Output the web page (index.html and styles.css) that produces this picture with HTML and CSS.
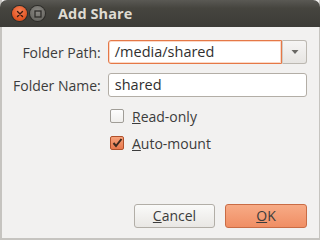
FILE: index.html
```html
<!DOCTYPE html>
<html>
<head>
<meta charset="utf-8">
<link rel="stylesheet" href="styles.css">
</head>
<body>
<div class="window">
  <div class="titlebar">
    <span class="wbtn close">
      <svg width="14" height="14" viewBox="0 0 14 14"><path d="M4.5 4.5 L9.5 9.5 M9.5 4.5 L4.5 9.5" stroke="#3a1a10" stroke-width="1.4" stroke-linecap="round"/></svg>
    </span>
    <span class="wbtn max">
      <svg width="14" height="14" viewBox="0 0 14 14"><rect x="4" y="4" width="6" height="6" fill="none" stroke="#2e2d2a" stroke-width="1.3"/></svg>
    </span>
    <span class="title">Add Share</span>
  </div>
  <div class="content">
    <div class="form">
      <label class="lbl">Folder Path:</label>
      <div class="combo">
        <div class="entry focus">/media/shared</div>
        <div class="drop"><svg width="8" height="6" viewBox="0 0 8 6"><path d="M0.5 1 L7.5 1 L4 5 Z" fill="#6a6864"/></svg></div>
      </div>
      <label class="lbl">Folder Name:</label>
      <div class="entry">shared</div>
    </div>
    <div class="checks">
      <div class="check"><span class="box"></span><span><u>R</u>ead-only</span></div>
      <div class="check"><span class="box on"><svg width="14" height="14" viewBox="0 0 14 14"><path d="M3.5 7 L6 10 L11.5 3" fill="none" stroke="#3d2a20" stroke-width="2"/></svg></span><span><u>A</u>uto-mount</span></div>
    </div>
    <div class="buttons">
      <div class="btn"><u>C</u>ancel</div>
      <div class="btn ok"><u>O</u>K</div>
    </div>
  </div>
</div>
</body>
</html>
```
FILE: styles.css
```css
html, body {
  margin: 0;
  padding: 0;
  background: #f2f1f0;
}
body {
  font-family: "Open Sans", "DejaVu Sans", sans-serif;
  font-size: 14px;
  color: #3c3c3c;
}
.window {
  width: 320px;
  height: 240px;
  box-sizing: border-box;
  display: flex;
  flex-direction: column;
  background: #f2f1f0;
  border-right: 1px solid #c6c4c0;
  border-bottom: 2px solid #c6c4c0;
  border-left: 2px solid #c6c4c0;
}
.titlebar {
  height: 27px;
  margin: 0 -1px 0 -2px;
  flex: none;
  display: flex;
  align-items: center;
  background: linear-gradient(#5a5954, #46453f 30%, #3c3b37);
  border-radius: 7px 7px 0 0;
  padding-left: 12px;
}
.wbtn {
  width: 15px;
  height: 15px;
  border-radius: 50%;
  display: flex;
  align-items: center;
  justify-content: center;
  margin-right: 3px;
}
.close {
  background: radial-gradient(circle at 50% 35%, #f7845a, #e0521f 70%, #b8401a);
  box-shadow: 0 0 0 1px #2e2d2a;
}
.max {
  background: radial-gradient(circle at 50% 35%, #8b8984, #6b6a65 70%, #55544f);
  box-shadow: 0 0 0 1px #2e2d2a;
}
.title {
  margin-left: 10px;
  color: #dfdbd2;
  font-weight: 700;
  font-size: 14.5px;
  letter-spacing: 0.1px;
}
.content {
  flex: 1;
  display: flex;
  flex-direction: column;
  padding: 13px 12px 10px 11px;
}
.form {
  display: grid;
  grid-template-columns: auto 1fr;
  column-gap: 7px;
  row-gap: 9px;
  align-items: center;
}
.lbl {
  text-align: right;
}
.combo {
  display: flex;
  height: 24px;
}
.entry {
  height: 24px;
  box-sizing: border-box;
  border: 1px solid #b3aea6;
  border-radius: 3px;
  background: #fff;
  padding: 0 6px;
  line-height: 21px;
  color: #2f2f2f;
  font-size: 14.5px;
}
.combo .entry {
  flex: 1;
  border-radius: 3px 0 0 3px;
}
.entry.focus {
  border-color: #e57847;
  box-shadow: inset 0 0 0 1px #fbd9c7;
}
.drop {
  width: 25px;
  box-sizing: border-box;
  border: 1px solid #bcb8b1;
  border-left: 1px solid #d0ccc6;
  border-radius: 0 3px 3px 0;
  background: linear-gradient(#f6f5f4, #e7e5e2);
  display: flex;
  align-items: center;
  justify-content: center;
}
.checks {
  display: flex;
  flex-direction: column;
  gap: 7px;
  margin-top: 9px;
  margin-left: 97px;
}
.check {
  display: flex;
  align-items: center;
  height: 20px;
  gap: 8px;
}
.box {
  width: 14px;
  height: 14px;
  box-sizing: border-box;
  border: 1px solid #a09d97;
  border-radius: 2px;
  background: linear-gradient(#fdfdfd, #f0efed);
  display: flex;
}
.box.on {
  border-color: #b0502a;
  background: linear-gradient(#f6a27a, #e8784c);
}
.box.on svg {
  margin: -1px;
}
.buttons {
  margin-top: auto;
  display: flex;
  justify-content: flex-end;
  gap: 10px;
}
.btn {
  width: 81px;
  height: 24px;
  box-sizing: border-box;
  border: 1px solid #b2aea7;
  border-radius: 3px;
  background: linear-gradient(#fafaf9, #e9e7e4);
  text-align: center;
  line-height: 22px;
  color: #3c3c3c;
}
.btn.ok {
  width: 82px;
  border-color: #c96c45;
  background: linear-gradient(#f7ab86, #f08e64);
}
```
